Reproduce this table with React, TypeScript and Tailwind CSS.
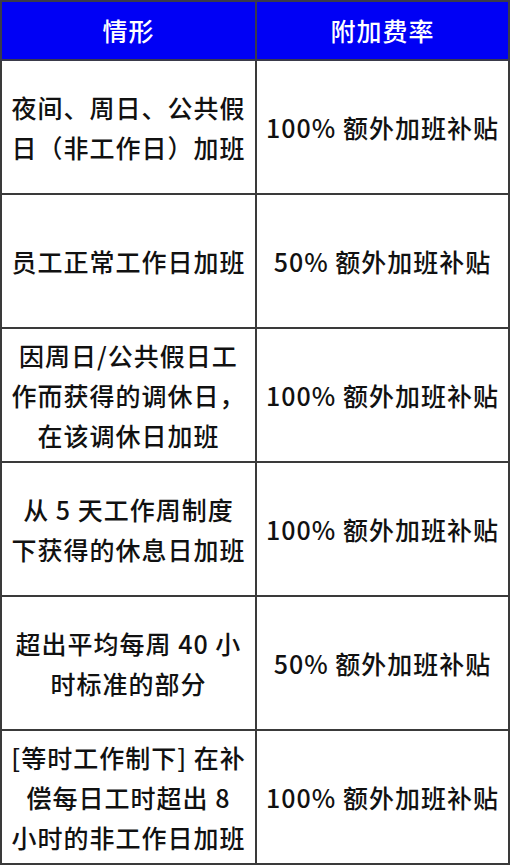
import React from "react"

const rows: { left: string[]; right: string }[] = [
  { left: ["夜间、周日、公共假", "日（非工作日）加班"], right: "100% 额外加班补贴" },
  { left: ["员工正常工作日加班"], right: "50% 额外加班补贴" },
  { left: ["因周日/公共假日工", "作而获得的调休日，", "在该调休日加班"], right: "100% 额外加班补贴" },
  { left: ["从 5 天工作周制度", "下获得的休息日加班"], right: "100% 额外加班补贴" },
  { left: ["超出平均每周 40 小", "时标准的部分"], right: "50% 额外加班补贴" },
  { left: ["[等时工作制下] 在补", "偿每日工时超出 8", "小时的非工作日加班"], right: "100% 额外加班补贴" },
]

export default function App() {
  return (
    <div className="w-[510px] h-[865px] bg-white font-['Noto_Sans_CJK_SC','Noto_Sans',sans-serif] text-[#111111]">
      <table className="w-[510px] table-fixed border-collapse">
        <thead>
          <tr className="h-[59px] bg-[#0000f5] text-white">
            <th className="w-[255px] border-2 border-[#3a3a4a] text-[25px] font-medium tracking-[1px]">情形</th>
            <th className="border-2 border-[#3a3a4a] text-[25px] font-medium tracking-[1px]">附加费率</th>
          </tr>
        </thead>
        <tbody>
          {rows.map((row, i) => (
            <tr key={i} className="h-[134px]">
              <td className="border-2 border-[#3a3a3a] px-1 text-center text-[25px] font-medium leading-[40px] tracking-[1px] whitespace-nowrap">
                {row.left.map((line, j) => (
                  <span key={j} className="block">
                    {line}
                  </span>
                ))}
              </td>
              <td className="border-2 border-[#3a3a3a] text-center text-[25px] font-medium leading-[40px] tracking-[1px] whitespace-nowrap">
                {row.right}
              </td>
            </tr>
          ))}
        </tbody>
      </table>
    </div>
  )
}
